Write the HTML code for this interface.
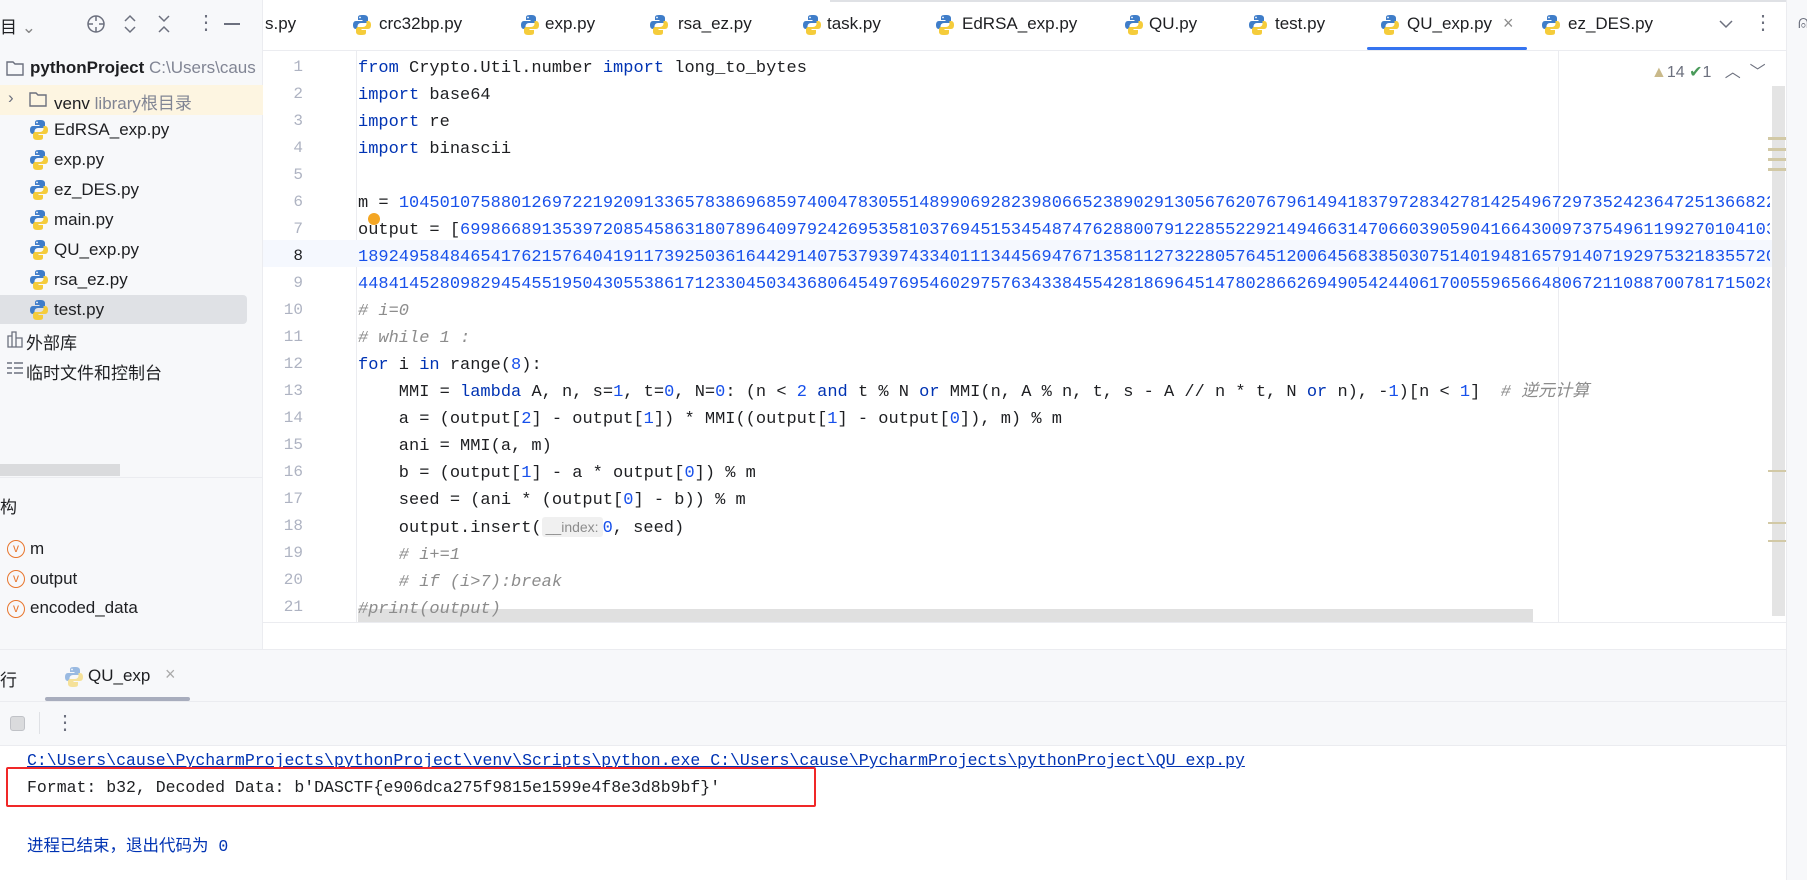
<!DOCTYPE html>
<html><head><meta charset="utf-8"><style>
*{margin:0;padding:0;box-sizing:border-box}
body{width:1807px;height:880px;overflow:hidden;background:#fff;font-family:"Liberation Sans","Noto Sans CJK SC",sans-serif;color:#1e1f22;position:relative}
.a{position:absolute;white-space:pre}
.mono{font-family:"Liberation Mono","Noto Sans CJK SC",monospace;font-size:17px}
.kw{color:#0033b3}.num{color:#1750eb}.cm{color:#8c8c8c;font-style:italic}
.ln{position:absolute;left:263px;width:40px;text-align:right;color:#aeb3c2;font-family:"Liberation Mono",monospace;font-size:16px}
.tab{position:absolute;top:14px;font-size:17px;color:#1e1f22}
.side{font-size:17px}
</style></head><body>
<svg width="0" height="0" style="position:absolute"><defs>
<g id="py"><path d="M9 1C5 1 5 2.5 5 4v2h4.5v1H3C1 7 0 8.5 0 11s1 4 3 4h1.5v-2.5C4.5 10.5 6 9 8 9h4.5c1.5 0 2.5-1 2.5-2.5V4c0-1.5-1.5-3-4-3z" fill="#3f7dc9"/><path d="M9 21c4 0 4-1.5 4-3v-2H8.5v-1H15c2 0 3-1.5 3-4s-1-4-3-4h-1.5v2.5c0 2-1.5 3.5-3.5 3.5H5.5C4 13 3 14 3 15.5V18c0 1.5 1.5 3 4 3z" fill="#f5cc3b"/><circle cx="7" cy="3.5" r=".9" fill="#fff"/></g>
</defs></svg>

<!-- sidebar -->
<div class="a" style="left:0;top:0;width:263px;height:649px;background:#f7f8fa;border-right:1px solid #ebecf0"></div>
<div class="a side" style="left:0;top:13px">目 <span style="color:#888">⌄</span></div>
<svg class="a" style="left:86px;top:14px" width="20" height="20"><circle cx="10" cy="10" r="8" fill="none" stroke="#6c707e" stroke-width="1.5"/><path d="M10 2v5M10 13v5M2 10h5M13 10h5" stroke="#6c707e" stroke-width="1.5"/></svg>
<svg class="a" style="left:122px;top:14px" width="16" height="20"><path d="M3 7l5-5 5 5M3 13l5 5 5-5" fill="none" stroke="#6c707e" stroke-width="1.5"/></svg>
<svg class="a" style="left:156px;top:14px" width="16" height="20"><path d="M3 2l5 5 5-5M3 18l5-5 5 5" fill="none" stroke="#6c707e" stroke-width="1.5"/></svg>
<div class="a" style="left:196px;top:10px;color:#6c707e;font-size:20px">⋮</div>
<div class="a" style="left:224px;top:23px;width:16px;height:2px;background:#6c707e"></div>

<svg class="a" style="left:6px;top:60px" width="18" height="16"><path d="M1 2h6l2 2h8v11H1z" fill="none" stroke="#6c707e" stroke-width="1.4"/></svg>
<div class="a side" style="left:30px;top:58px;font-weight:bold">pythonProject <span style="font-weight:normal;color:#818594">C:\Users\caus</span></div>
<div class="a" style="left:0;top:85px;width:263px;height:30px;background:#fdf5e1"></div>
<div class="a side" style="left:8px;top:88px;color:#6c707e">›</div>
<svg class="a" style="left:29px;top:91px" width="18" height="16"><path d="M1 2h6l2 2h8v11H1z" fill="none" stroke="#6c707e" stroke-width="1.4"/></svg>
<div class="a side" style="left:54px;top:89px">venv <span style="color:#818594">library根目录</span></div>
<div class="a" style="left:0;top:295px;width:247px;height:29px;background:#dfe1e5;border-radius:0 4px 4px 0"></div>
<svg class="a" style="left:30px;top:119px" width="18" height="22"><use href="#py"/></svg><div class="a side" style="left:54px;top:120px">EdRSA_exp.py</div>
<svg class="a" style="left:30px;top:149px" width="18" height="22"><use href="#py"/></svg><div class="a side" style="left:54px;top:150px">exp.py</div>
<svg class="a" style="left:30px;top:179px" width="18" height="22"><use href="#py"/></svg><div class="a side" style="left:54px;top:180px">ez_DES.py</div>
<svg class="a" style="left:30px;top:209px" width="18" height="22"><use href="#py"/></svg><div class="a side" style="left:54px;top:210px">main.py</div>
<svg class="a" style="left:30px;top:239px" width="18" height="22"><use href="#py"/></svg><div class="a side" style="left:54px;top:240px">QU_exp.py</div>
<svg class="a" style="left:30px;top:269px" width="18" height="22"><use href="#py"/></svg><div class="a side" style="left:54px;top:270px">rsa_ez.py</div>
<svg class="a" style="left:30px;top:299px" width="18" height="22"><use href="#py"/></svg><div class="a side" style="left:54px;top:300px">test.py</div>
<svg class="a" style="left:6px;top:330px" width="18" height="18"><path d="M2 6h4v11H2zM6 2h4v15H6zM10 8h6v9h-6z" fill="none" stroke="#6c707e" stroke-width="1.3"/></svg>
<div class="a side" style="left:26px;top:329px">外部库</div>
<svg class="a" style="left:6px;top:360px" width="18" height="18"><path d="M1 3h5M1 8h5M1 13h5M8 3h9M8 8h9M8 13h9" stroke="#6c707e" stroke-width="1.5"/></svg>
<div class="a side" style="left:26px;top:359px">临时文件和控制台</div>
<div class="a" style="left:0;top:464px;width:120px;height:12px;background:#dadbdd"></div>
<div class="a" style="left:0;top:477px;width:263px;height:1px;background:#ebecf0"></div>
<div class="a side" style="left:0;top:493px">构</div>
<div class="a" style="left:7px;top:540px;width:18px;height:18px;border:1.5px solid #e8762d;border-radius:50%;color:#e8762d;font-size:12px;text-align:center;line-height:15px">v</div><div class="a side" style="left:30px;top:539px">m</div>
<div class="a" style="left:7px;top:570px;width:18px;height:18px;border:1.5px solid #e8762d;border-radius:50%;color:#e8762d;font-size:12px;text-align:center;line-height:15px">v</div><div class="a side" style="left:30px;top:569px">output</div>
<div class="a" style="left:7px;top:600px;width:18px;height:18px;border:1.5px solid #e8762d;border-radius:50%;color:#e8762d;font-size:12px;text-align:center;line-height:15px">v</div><div class="a side" style="left:30px;top:598px">encoded_data</div>

<!-- tabs -->
<div class="a" style="left:263px;top:50px;width:1524px;height:1px;background:#ebecf0"></div>
<div class="a" style="left:830px;top:0;width:957px;height:2px;background:#dfe1e5"></div>
<div class="tab" style="left:265px">s.py</div>
<svg class="a" style="left:353px;top:14px" width="18" height="22"><use href="#py"/></svg><div class="tab" style="left:379px">crc32bp.py</div>
<svg class="a" style="left:521px;top:14px" width="18" height="22"><use href="#py"/></svg><div class="tab" style="left:545px">exp.py</div>
<svg class="a" style="left:650px;top:14px" width="18" height="22"><use href="#py"/></svg><div class="tab" style="left:678px">rsa_ez.py</div>
<svg class="a" style="left:803px;top:14px" width="18" height="22"><use href="#py"/></svg><div class="tab" style="left:827px">task.py</div>
<svg class="a" style="left:936px;top:14px" width="18" height="22"><use href="#py"/></svg><div class="tab" style="left:962px">EdRSA_exp.py</div>
<svg class="a" style="left:1125px;top:14px" width="18" height="22"><use href="#py"/></svg><div class="tab" style="left:1149px">QU.py</div>
<svg class="a" style="left:1249px;top:14px" width="18" height="22"><use href="#py"/></svg><div class="tab" style="left:1275px">test.py</div>
<svg class="a" style="left:1381px;top:14px" width="18" height="22"><use href="#py"/></svg><div class="tab" style="left:1407px">QU_exp.py</div>
<div class="a" style="left:1503px;top:13px;color:#8c8c8c;font-size:18px">×</div>
<div class="a" style="left:1367px;top:47px;width:160px;height:3px;background:#3574f0;border-radius:2px"></div>
<svg class="a" style="left:1542px;top:14px" width="18" height="22"><use href="#py"/></svg><div class="tab" style="left:1568px">ez_DES.py</div>
<svg class="a" style="left:1718px;top:18px" width="16" height="12"><path d="M2 3l6 6 6-6" fill="none" stroke="#6c707e" stroke-width="1.5"/></svg>
<div class="a" style="left:1753px;top:10px;color:#6c707e;font-size:20px">⋮</div>
<div class="a" style="left:1786px;top:0;width:21px;height:880px;background:#f7f8fa;border-left:1px solid #ebecf0"></div>
<div class="a" style="left:1798px;top:12px;font-size:18px;color:#6c707e">⍝</div>

<!-- editor -->
<div class="a" style="left:356px;top:51px;width:1px;height:571px;background:#ebecf0"></div>
<div class="a" style="left:1558px;top:51px;width:1px;height:571px;background:#ebecf0"></div>
<div class="a" style="left:263px;top:240px;width:1523px;height:27px;background:#f5f8fe"></div>
<div class="a" style="left:1772px;top:86px;width:13px;height:530px;background:#e4e4e4"></div>
<div class="a" style="left:1768px;top:137px;width:18px;height:3px;background:#d2c9a6"></div>
<div class="a" style="left:1768px;top:148px;width:18px;height:3px;background:#d2c9a6"></div>
<div class="a" style="left:1768px;top:158px;width:18px;height:3px;background:#d2c9a6"></div>
<div class="a" style="left:1768px;top:168px;width:18px;height:3px;background:#d2c9a6"></div>
<div class="a" style="left:1768px;top:470px;width:18px;height:2px;background:#d2c9a6"></div>
<div class="a" style="left:1768px;top:522px;width:18px;height:2px;background:#d2c9a6"></div>
<div class="a" style="left:1768px;top:540px;width:18px;height:2px;background:#d2c9a6"></div>
<div class="a" style="left:1651px;top:58px;font-size:16px;color:#6c707e"><span style="color:#c9b98a">▲</span>14 <span style="color:#4a9a5a">✔</span>1   <span>︿</span>  <span>﹀</span></div>
<div class="a" style="left:358px;top:609px;width:1175px;height:13px;background:#e0e0e0"></div>
<div class="a" style="left:263px;top:622px;width:1523px;height:1px;background:#ebecf0"></div>

<div style="position:absolute;left:0;top:0;width:1770px;height:622px;overflow:hidden">
<div class="ln" style="top:58px">1</div><div class="ln" style="top:85px">2</div><div class="ln" style="top:112px">3</div><div class="ln" style="top:139px">4</div><div class="ln" style="top:166px">5</div><div class="ln" style="top:193px">6</div><div class="ln" style="top:220px">7</div><div class="ln" style="top:247px;color:#1e1f22">8</div><div class="ln" style="top:274px">9</div><div class="ln" style="top:301px">10</div><div class="ln" style="top:328px">11</div><div class="ln" style="top:355px">12</div><div class="ln" style="top:382px">13</div><div class="ln" style="top:409px">14</div><div class="ln" style="top:436px">15</div><div class="ln" style="top:463px">16</div><div class="ln" style="top:490px">17</div><div class="ln" style="top:517px">18</div><div class="ln" style="top:544px">19</div><div class="ln" style="top:571px">20</div><div class="ln" style="top:598px">21</div>
<div class="a mono" style="left:358px;top:55px;line-height:27px"><div><span class="kw">from</span> Crypto.Util.number <span class="kw">import</span> long_to_bytes</div><div><span class="kw">import</span> base64</div><div><span class="kw">import</span> re</div><div><span class="kw">import</span> binascii</div><div> </div><div>m = <span class="num">104501075880126972219209133657838696859740047830551489906928239806652389029130567620767961494183797283427814254967297352423647251366822837</span></div><div>output = [<span class="num">6998668913539720854586318078964097924269535810376945153454874762880079122855229214946631470660390590416643009737549611992701041036474</span></div><div><span class="num">1892495848465417621576404191173925036164429140753793974334011134456947671358112732280576451200645683850307514019481657914071929753218355720294</span></div><div><span class="num">4484145280982945455195043055386171233045034368064549769546029757634338455428186964514780286626949054244061700559656648067211088700781715028531</span></div><div class="cm"># i=0</div><div class="cm"># while 1 :</div><div><span class="kw">for</span> i <span class="kw">in</span> range(<span class="num">8</span>):</div><div>    MMI = <span class="kw">lambda</span> A, n, s=<span class="num">1</span>, t=<span class="num">0</span>, N=<span class="num">0</span>: (n &lt; <span class="num">2</span> <span class="kw">and</span> t % N <span class="kw">or</span> MMI(n, A % n, t, s - A // n * t, N <span class="kw">or</span> n), -<span class="num">1</span>)[n &lt; <span class="num">1</span>]  <span class="cm"># 逆元计算</span></div><div>    a = (output[<span class="num">2</span>] - output[<span class="num">1</span>]) * MMI((output[<span class="num">1</span>] - output[<span class="num">0</span>]), m) % m</div><div>    ani = MMI(a, m)</div><div>    b = (output[<span class="num">1</span>] - a * output[<span class="num">0</span>]) % m</div><div>    seed = (ani * (output[<span class="num">0</span>] - b)) % m</div><div>    output.insert(<span style="background:#f0f0f0;color:#8c8c8c;font-family:'Liberation Sans',sans-serif;font-size:14px;padding:2px 4px;border-radius:3px">__index:</span><span class="num">0</span>, seed)</div><div class="cm">    # i+=1</div><div class="cm">    # if (i&gt;7):break</div><div class="cm">#print(output)</div></div>
<div class="a" style="left:368px;top:213px;width:12px;height:12px;border-radius:50%;background:#f4a623"></div>
</div>

<!-- bottom panel -->
<div class="a" style="left:0;top:649px;width:1786px;height:96px;background:#f7f8fa;border-top:1px solid #ebecf0"></div>
<div class="a" style="left:0;top:666px;font-size:17px">行</div>
<svg class="a" style="left:65px;top:666px" width="18" height="22" opacity=".5"><use href="#py"/></svg>
<div class="a" style="left:88px;top:666px;font-size:17px">QU_exp</div>
<div class="a" style="left:165px;top:664px;font-size:18px;color:#aaa">×</div>
<div class="a" style="left:45px;top:697px;width:145px;height:4px;background:#a8adbd;border-radius:2px"></div>
<div class="a" style="left:0;top:701px;width:1786px;height:1px;background:#ebecf0"></div>
<div class="a" style="left:10px;top:716px;width:15px;height:15px;background:#dadbdd;border:1px solid #c0c2c7;border-radius:3px"></div>
<div class="a" style="left:39px;top:712px;width:1px;height:22px;background:#dfe1e5"></div>
<div class="a" style="left:55px;top:710px;font-size:20px;color:#6c707e">⋮</div>
<div class="a" style="left:0;top:745px;width:1786px;height:1px;background:#ebecf0"></div>
<div class="a mono" style="left:27px;top:751px;font-size:16.5px;color:#0033b3;text-decoration:underline">C:\Users\cause\PycharmProjects\pythonProject\venv\Scripts\python.exe C:\Users\cause\PycharmProjects\pythonProject\QU_exp.py</div>
<div class="a mono" style="left:27px;top:778px;font-size:16.5px">Format: b32, Decoded Data: b'DASCTF{e906dca275f9815e1599e4f8e3d8b9bf}'</div>
<div class="a" style="left:6px;top:767px;width:810px;height:40px;border:2.5px solid #f02828;border-radius:2px"></div>
<div class="a mono" style="left:27px;top:832px;font-size:16.5px;color:#0033b3">进程已结束，退出代码为 0</div>
</body></html>
